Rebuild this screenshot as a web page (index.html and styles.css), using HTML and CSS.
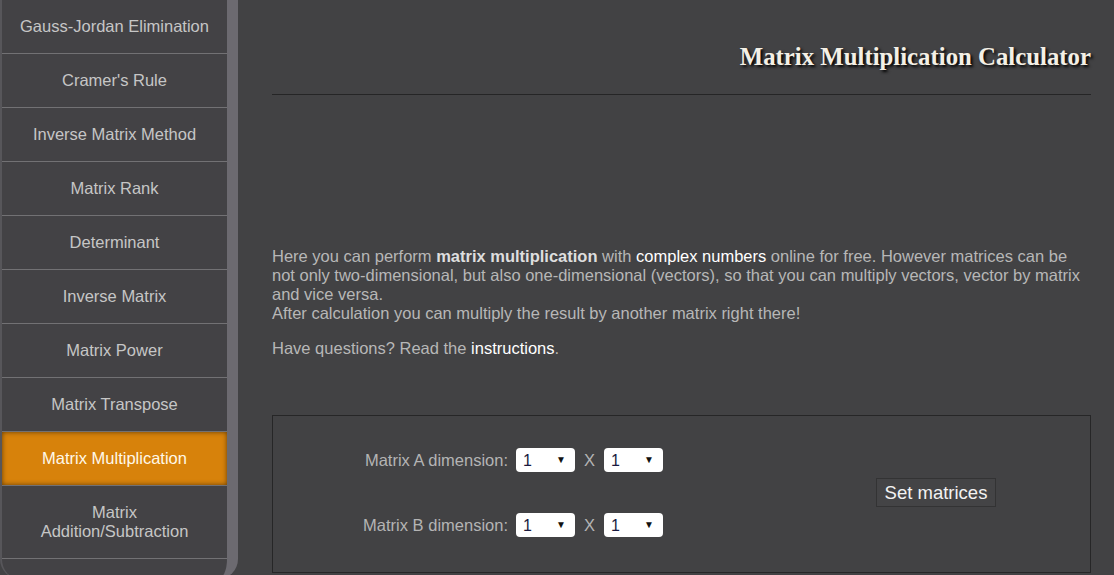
FILE: index.html
```html
<!DOCTYPE html>
<html lang="en">
<head>
  <meta charset="UTF-8">
  <meta name="viewport" content="width=device-width, initial-scale=1.0">
  <title>Matrix Multiplication Calculator</title>
<link rel="stylesheet" href="styles.css">
</head>
<body>

  <div class="sidebar">
    <a class="menu-item" href="#">Gauss-Jordan Elimination</a>
    <a class="menu-item" href="#">Cramer's Rule</a>
    <a class="menu-item" href="#">Inverse Matrix Method</a>
    <a class="menu-item" href="#">Matrix Rank</a>
    <a class="menu-item" href="#">Determinant</a>
    <a class="menu-item" href="#">Inverse Matrix</a>
    <a class="menu-item" href="#">Matrix Power</a>
    <a class="menu-item" href="#">Matrix Transpose</a>
    <a class="menu-item active" href="#">Matrix Multiplication</a>
    <a class="menu-item" href="#">Matrix<br>Addition/Subtraction</a>
  </div>

  <div class="main">
    <h1 class="title">Matrix Multiplication Calculator</h1>
    <div class="ad-space"></div>

    <p class="intro">
      Here you can perform <b>matrix multiplication</b> with <a href="#">complex numbers</a> online for free. However matrices can be not only two-dimensional, but also one-dimensional (vectors), so that you can multiply vectors, vector by matrix and vice versa.<br>
      After calculation you can multiply the result by another matrix right there!
    </p>
    <p class="intro">Have questions? Read the <a href="#">instructions</a>.</p>

    <div class="calc-box">
      <div class="dims">
        <div class="dim-row">
          <label>Matrix A dimension:</label>
          <span class="sel"><select><option>1</option><option>2</option><option>3</option></select></span>
          <span class="times">X</span>
          <span class="sel"><select><option>1</option><option>2</option><option>3</option></select></span>
        </div>
        <div class="dim-row">
          <label>Matrix B dimension:</label>
          <span class="sel"><select><option>1</option><option>2</option><option>3</option></select></span>
          <span class="times">X</span>
          <span class="sel"><select><option>1</option><option>2</option><option>3</option></select></span>
        </div>
      </div>
      <button class="set-btn">Set matrices</button>
    </div>
  </div>

</body>
</html>
```

FILE: styles.css
```css
body {
  margin: 0;
  padding: 0;
  font-family: "Liberation Sans", Arial, sans-serif;
  background: #424244;
  display: flex;
  align-items: flex-start;
  min-height: 100vh;
  overflow: hidden;
}

/* left menu */
.sidebar {
  width: 225px;
  flex-shrink: 0;
  background: #434245;
  border-left: 2px solid #57565a;
  border-right: 11px solid #6c6a70;
  border-radius: 0 0 20px 20px;
  padding-bottom: 20px;
  display: flex;
  flex-direction: column;
}

.menu-item {
  display: block;
  padding: 17px 2px;
  line-height: 19px;
  font-size: 16.5px;
  color: #c6c6c6;
  text-align: center;
  text-decoration: none;
  border-bottom: 1px solid #727174;
}

.menu-item.active {
  background: #d7820b;
  color: #fff8e8;
  box-shadow: inset 0 0 5px rgba(0, 0, 0, 0.55);
}

/* content */
.main {
  flex: 1;
  padding: 0 23px 0 34px;
}

.title {
  margin: 0;
  padding: 40px 0 20px;
  font-family: "Liberation Serif", "Times New Roman", serif;
  font-size: 24.8px;
  line-height: 34px;
  font-weight: bold;
  text-align: right;
  color: #f4f0e6;
  text-shadow: 2px 2px 3px #000;
  border-bottom: 1px solid #252526;
}

.ad-space {
  height: 152px;
}

.intro {
  margin: 0 0 16px;
  font-size: 16.5px;
  line-height: 19px;
  color: #b7b7b7;
}

.intro b {
  color: #dedede;
}

.intro a {
  color: #ffffff;
  text-decoration: none;
}

.calc-box {
  margin-top: 57px;
  border: 1px solid #262627;
  padding: 32px 0 35px;
  display: flex;
  align-items: center;
}

.dims {
  display: flex;
  flex-direction: column;
  gap: 41px;
}

.dim-row {
  display: flex;
  align-items: center;
  height: 24px;
}

.dim-row label {
  width: 235px;
  text-align: right;
  font-size: 16.5px;
  color: #b4b4b4;
  margin-right: 8px;
}

.sel {
  position: relative;
  display: inline-block;
}

.sel select {
  appearance: none;
  -webkit-appearance: none;
  width: 59px;
  height: 24px;
  border: none;
  border-radius: 4px;
  background: #fff;
  padding: 0 0 0 7px;
  font-family: "Liberation Sans", Arial, sans-serif;
  font-size: 16px;
  color: #1a1a40;
}

.sel::after {
  content: "▼";
  position: absolute;
  right: 9px;
  top: 6px;
  font-size: 10px;
  color: #111;
  pointer-events: none;
}

.times {
  width: 29px;
  text-align: center;
  font-size: 16.5px;
  color: #b4b4b4;
}

.set-btn {
  margin-left: 213px;
  width: 120px;
  height: 29px;
  padding: 0;
  background: #444446;
  border: 1px solid #333334;
  font-family: "Liberation Sans", Arial, sans-serif;
  font-size: 18.5px;
  color: #f2f2f2;
  cursor: pointer;
}
```
